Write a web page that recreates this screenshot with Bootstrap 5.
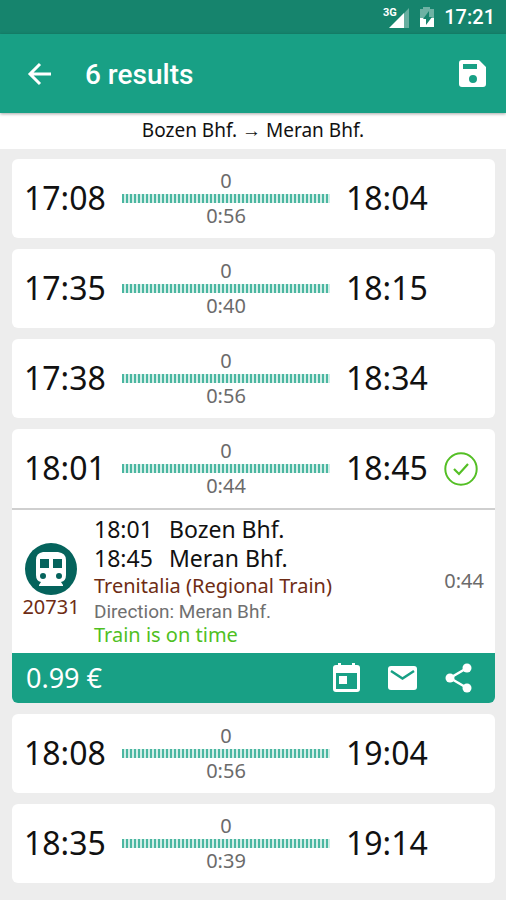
<!DOCTYPE html>
<html lang="en">
<head>
<meta charset="utf-8">
<meta name="viewport" content="width=device-width, initial-scale=1">
<title>6 results</title>
<link href="https://cdn.jsdelivr.net/npm/bootstrap@5.3.0/dist/css/bootstrap.min.css" rel="stylesheet">
<style>
body{background:#ededed;font-family:"Noto Sans",sans-serif;color:#111}
.status-bar{height:34px;background:#16846d;font:500 20px/36px Roboto,sans-serif;padding-right:11px}
.app-bar{height:79px;background:#18a085;padding:0 20px 0 27px;box-shadow:0 1px 3px rgba(0,0,0,.35)}
.app-title{font:500 28px/36px Roboto,sans-serif;margin-left:32px;padding-top:2px}
.route{height:36px;font-size:19px;line-height:34px}
.trips{padding:10px 11px 17px 12px;gap:11px}
.trip{border-radius:6px;overflow:hidden}
.trip-head{height:79px;padding:0 17px 0 12px;gap:16px}
.clock{font-size:32px;line-height:38px;width:82px;padding-bottom:2px}
.span-info{font-size:20px;line-height:22px;color:#6b6b6b}
.track{height:9px;margin:2px 0 2px;background:repeating-linear-gradient(90deg,#4bb7a1 0 2px,#d3eee8 2px 4px)}
.slot{width:34px;height:34px}
.leg{border-top:2px solid #cfcfcf;padding:5px 11px 6px 9px}
.line-id{width:60px;font-size:20px;line-height:24px}
.brown{color:#6e2c14}
.leg-body{margin-left:13px}
.stop{font-size:23px;line-height:29px}
.stop span{width:75px}
.operator{font-size:20px;line-height:26px}
.direction{font:19px/26px Roboto,sans-serif;color:#707070}
.ontime{font-size:20px;line-height:20px;color:#4fc01f;padding-bottom:2px}
.fare{height:50px;background:#18a085;font-size:27px;padding:0 20px 0 14px}
.tool{background:none;border:0;padding:0;color:#fff;display:block}
.tool svg,.slot svg{display:block}
</style>
<script src="https://cdn.jsdelivr.net/npm/bootstrap@5.3.0/dist/js/bootstrap.bundle.min.js"></script>
</head>
<body>
<div class="status-bar d-flex align-items-center justify-content-end text-white">
  <svg width="28" height="26" viewBox="0 0 28 26" aria-hidden="true"><path d="M27 4v20H8z" fill="#fff" opacity=".35"/><path d="M22 9v15H7z" fill="#fff"/><text x="1" y="12" font-family="Roboto" font-weight="700" font-size="11" fill="#fff">3G</text></svg>
  <svg class="ms-2" width="18" height="22" viewBox="0 0 18 22" aria-hidden="true"><path d="M5 1h7v2h4v18H2V3h3z" fill="#fff" opacity=".38"/><path d="M2 12h14v9H2z" fill="#fff"/><path d="M11 5 5 13h3v6l6-8h-3z" fill="#16846d"/></svg>
  <span class="ms-2">17:21</span>
</div>
<header class="app-bar d-flex align-items-center text-white position-relative">
  <button class="tool" aria-label="Back"><svg width="26" height="26" viewBox="0 0 26 26" fill="none" stroke="currentColor" stroke-width="3"><path d="M24 13H4M13 3 3 13l10 10"/></svg></button>
  <h1 class="app-title mb-0">6 results</h1>
  <button class="tool ms-auto" aria-label="Save"><svg width="27" height="27" viewBox="0 0 27 27"><path fill="currentColor" fill-rule="evenodd" d="M3 0h17l7 7v17q0 3-3 3H3q-3 0-3-3V3q0-3 3-3zM4 4v5h14V4zM14 15a4 4 0 1 0 0 8 4 4 0 0 0 0-8z"/></svg></button>
</header>
<div class="route bg-white text-center">Bozen Bhf. → Meran Bhf.</div>
<main class="trips d-flex flex-column">
  <section class="trip bg-white"><div class="trip-head d-flex align-items-center"><div class="clock">17:08</div><div class="span-info flex-fill text-center"><div>0</div><div class="track"></div><div>0:56</div></div><div class="clock">18:04</div><div class="slot"></div></div></section>
  <section class="trip bg-white"><div class="trip-head d-flex align-items-center"><div class="clock">17:35</div><div class="span-info flex-fill text-center"><div>0</div><div class="track"></div><div>0:40</div></div><div class="clock">18:15</div><div class="slot"></div></div></section>
  <section class="trip bg-white"><div class="trip-head d-flex align-items-center"><div class="clock">17:38</div><div class="span-info flex-fill text-center"><div>0</div><div class="track"></div><div>0:56</div></div><div class="clock">18:34</div><div class="slot"></div></div></section>
  <section class="trip bg-white">
    <div class="trip-head d-flex align-items-center"><div class="clock">18:01</div><div class="span-info flex-fill text-center"><div>0</div><div class="track"></div><div>0:44</div></div><div class="clock">18:45</div><div class="slot"><svg width="34" height="34" viewBox="0 0 34 34" fill="none" stroke="#54bf25" stroke-width="2"><circle cx="17" cy="17" r="15.7"/><path d="m10 17 5 5 9-10" stroke-width="2.2"/></svg></div></div>
    <div class="leg d-flex align-items-center">
      <div class="line-id text-center brown">
        <svg class="d-block mx-auto" width="52" height="52" viewBox="0 0 52 52" aria-hidden="true"><circle cx="26" cy="26" r="26" fill="#05635c"/><path fill="#fff" fill-rule="evenodd" d="M18 9h15q8 1 8 8v15q0 6-5 7l2 3v1H14v-1l2-3q-5-1-5-7V17q0-7 7-8zM15 16v9h9v-9zM28 16v9h9v-9zM18 30a3 3 0 1 0 0 6 3 3 0 0 0 0-6zM34 30a3 3 0 1 0 0 6 3 3 0 0 0 0-6z"/></svg>
        <div>20731</div>
      </div>
      <div class="leg-body flex-fill">
        <div class="stop d-flex"><span>18:01</span>Bozen Bhf.</div>
        <div class="stop d-flex"><span>18:45</span>Meran Bhf.</div>
        <div class="operator brown">Trenitalia (Regional Train)</div>
        <div class="direction">Direction: Meran Bhf.</div>
        <div class="ontime">Train is on time</div>
      </div>
      <div class="span-info">0:44</div>
    </div>
    <div class="fare d-flex align-items-center text-white">
      <span class="me-auto">0.99 €</span>
      <div class="d-flex align-items-center gap-4">
      <button class="tool" aria-label="Add to calendar"><svg width="32" height="30" viewBox="0 0 32 30"><path fill="currentColor" fill-rule="evenodd" d="M7 0h3v2h11V0h3v2h2q3 0 3 3v21q0 3-3 3H5q-3 0-3-3V5q0-3 3-3h2zM5 10v16h21V10zM8 13h8v8H8z"/></svg></button>
      <button class="tool" aria-label="Send by mail"><svg width="32" height="26" viewBox="0 0 32 26"><rect x="1" y="1" width="29" height="24" rx="3" fill="currentColor"/><path d="m4 6 11.500 7.500L27 6" fill="none" stroke="#18a085" stroke-width="2.500"/></svg></button>
      <button class="tool" aria-label="Share"><svg width="32" height="30" viewBox="0 0 32 30" fill="currentColor"><path d="M24 5 7 15l17 10" fill="none" stroke="currentColor" stroke-width="2.500"/><circle cx="24" cy="5" r="4.500"/><circle cx="7" cy="15" r="4.500"/><circle cx="24" cy="25" r="4.500"/></svg></button>
      </div>
    </div>
  </section>
  <section class="trip bg-white"><div class="trip-head d-flex align-items-center"><div class="clock">18:08</div><div class="span-info flex-fill text-center"><div>0</div><div class="track"></div><div>0:56</div></div><div class="clock">19:04</div><div class="slot"></div></div></section>
  <section class="trip bg-white"><div class="trip-head d-flex align-items-center"><div class="clock">18:35</div><div class="span-info flex-fill text-center"><div>0</div><div class="track"></div><div>0:39</div></div><div class="clock">19:14</div><div class="slot"></div></div></section>
</main>
</body>
</html>
